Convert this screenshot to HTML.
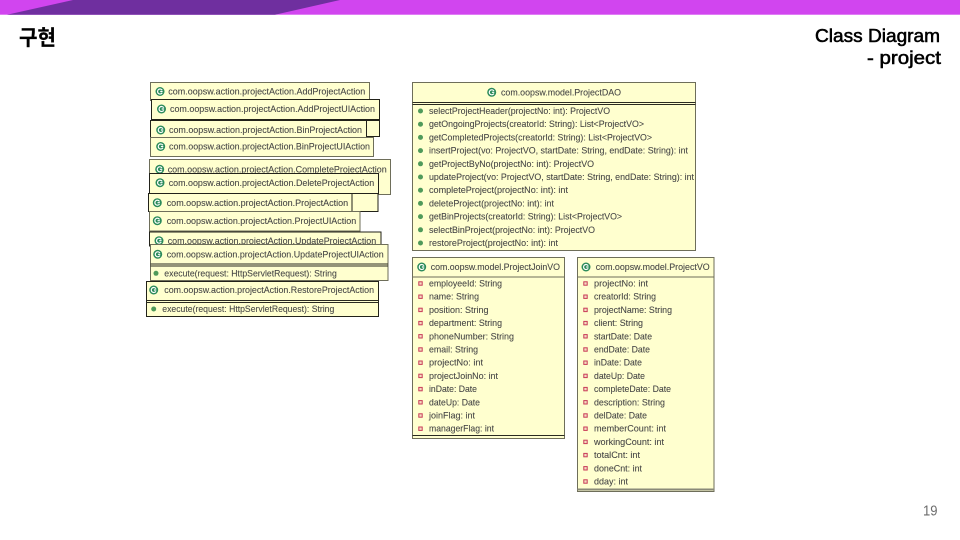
<!DOCTYPE html>
<html lang="ko"><head><meta charset="utf-8"><title>Class Diagram</title>
<style>
html,body{margin:0;padding:0;background:#fff;width:960px;height:540px;overflow:hidden}
svg{display:block}
.d text{font:9.4px "Liberation Sans",sans-serif;fill:#454545;stroke:#454545;stroke-width:.08}
.d rect{fill:#ffffcf;stroke:#22221a;stroke-width:1}
.d rect.g{stroke:#6e6e5a}
.d line{stroke:#2a2a20;stroke-width:1}
</style></head><body>
<svg width="960" height="540" viewBox="0 0 960 540" xmlns="http://www.w3.org/2000/svg">
<defs>
<g id="c"><circle r="4.5" fill="#2a8a5a"/><path d="M2.2-1.3A2.5 2.500 0 1 0 2.200 1.300M.2 0H2.600" fill="none" stroke="#fff" stroke-width="1.200"/></g>
<g id="m"><circle r="2.500" fill="#4f9a5a"/></g>
<g id="f"><rect x="-1.700" y="-1.700" width="3.400" height="3.400" style="fill:#f5dcc0;stroke:#c83a58;stroke-width:1"/></g>
</defs>
<rect width="960" height="14.700" fill="#d145ef"/>
<polygon points="7,14.700 73,0 340,0 275,14.700" fill="#6f2f9f"/>
<text x="19" y="45" font-family="'Liberation Sans','Noto Sans CJK KR',sans-serif" font-size="21" font-weight="700" fill="#000" stroke="#000" stroke-width=".2" textLength="37" lengthAdjust="spacingAndGlyphs">구현</text>
<text x="815" y="42" font-family="'Liberation Sans',sans-serif" font-size="18" stroke="#000" stroke-width=".55" fill="#000" textLength="125" lengthAdjust="spacingAndGlyphs">Class Diagram</text>
<text x="867" y="64" font-family="'Liberation Sans',sans-serif" font-size="18" stroke="#000" stroke-width=".55" fill="#000" textLength="74" lengthAdjust="spacingAndGlyphs">- project</text>
<text x="923" y="515.500" font-family="'Liberation Sans',sans-serif" font-size="14.500" fill="#6b6b6b" textLength="14.500" lengthAdjust="spacingAndGlyphs">19</text>

<g class="d" style="filter:blur(.3px)">
<!-- left stack -->
<rect x="150.500" y="120.500" width="229" height="16"/>
<rect class="g" x="150.500" y="82.500" width="219" height="18"/>
<use href="#c" x="160" y="91.500"/><text x="168.300" y="94.700" textLength="197" lengthAdjust="spacingAndGlyphs">com.oopsw.action.projectAction.AddProjectAction</text>
<rect x="151.500" y="99.500" width="228" height="20"/>
<use href="#c" x="161.500" y="109"/><text x="170" y="112.200" textLength="205" lengthAdjust="spacingAndGlyphs">com.oopsw.action.projectAction.AddProjectUIAction</text>
<rect x="150.500" y="120.500" width="216" height="18"/>
<use href="#c" x="160.700" y="130"/><text x="169" y="133.200" textLength="193" lengthAdjust="spacingAndGlyphs">com.oopsw.action.projectAction.BinProjectAction</text>
<rect class="g" x="150.500" y="137.500" width="223" height="19"/>
<use href="#c" x="160.700" y="146.500"/><text x="169" y="149.700" textLength="201" lengthAdjust="spacingAndGlyphs">com.oopsw.action.projectAction.BinProjectUIAction</text>
<rect class="g" x="149.500" y="159.500" width="241" height="35"/>
<use href="#c" x="159.700" y="169.300"/><text x="167.700" y="172.500" textLength="219" lengthAdjust="spacingAndGlyphs">com.oopsw.action.projectAction.CompleteProjectAction</text>
<rect x="149.500" y="173.500" width="229" height="20"/>
<use href="#c" x="160" y="182.700"/><text x="168.700" y="185.900" textLength="205.500" lengthAdjust="spacingAndGlyphs">com.oopsw.action.projectAction.DeleteProjectAction</text>
<rect x="148.500" y="193.500" width="229.500" height="18"/>
<rect x="148.500" y="193.500" width="203.500" height="18"/>
<use href="#c" x="157.300" y="202.700"/><text x="166.700" y="205.900" textLength="181.500" lengthAdjust="spacingAndGlyphs">com.oopsw.action.projectAction.ProjectAction</text>
<rect class="g" x="149.500" y="211.500" width="210.500" height="19.500"/>
<use href="#c" x="157.300" y="220.700"/><text x="166.700" y="223.900" textLength="189.500" lengthAdjust="spacingAndGlyphs">com.oopsw.action.projectAction.ProjectUIAction</text>
<rect x="149.500" y="232" width="231.500" height="14"/>
<use href="#c" x="159" y="240.700"/><text x="167.700" y="243.900" textLength="208.500" lengthAdjust="spacingAndGlyphs">com.oopsw.action.projectAction.UpdateProjectAction</text>
<rect class="g" x="150.500" y="244.500" width="237.500" height="36"/>
<line x1="150.500" y1="264" x2="388" y2="264"/><line x1="150.500" y1="266" x2="388" y2="266"/>
<use href="#c" x="157.700" y="254.300"/><text x="166.700" y="257.500" textLength="217" lengthAdjust="spacingAndGlyphs">com.oopsw.action.projectAction.UpdateProjectUIAction</text>
<use href="#m" x="156" y="273.300"/><text x="164.300" y="276.300" textLength="172.500" lengthAdjust="spacingAndGlyphs">execute(request: HttpServletRequest): String</text>
<rect x="146.500" y="281.500" width="232" height="35"/>
<line x1="146.500" y1="300.500" x2="378.500" y2="300.500"/><line x1="146.500" y1="302.500" x2="378.500" y2="302.500"/>
<use href="#c" x="153.700" y="290"/><text x="164.300" y="293.200" textLength="209.700" lengthAdjust="spacingAndGlyphs">com.oopsw.action.projectAction.RestoreProjectAction</text>
<use href="#m" x="153.700" y="309"/><text x="162.300" y="312" textLength="172" lengthAdjust="spacingAndGlyphs">execute(request: HttpServletRequest): String</text>

<!-- DAO -->
<rect class="g" x="412.500" y="82.500" width="283" height="168"/>
<line x1="412.500" y1="102.500" x2="695.500" y2="102.500"/><line x1="412.500" y1="104.500" x2="695.500" y2="104.500"/>
<use href="#c" x="491.700" y="92.300"/><text x="501" y="95.500" textLength="120" lengthAdjust="spacingAndGlyphs">com.oopsw.model.ProjectDAO</text>
<use href="#m" x="420.500" y="111"/><text x="429" y="114" textLength="181" lengthAdjust="spacingAndGlyphs">selectProjectHeader(projectNo: int): ProjectVO</text>
<use href="#m" x="420.500" y="124.200"/><text x="429" y="127.200" textLength="215" lengthAdjust="spacingAndGlyphs">getOngoingProjects(creatorId: String): List&lt;ProjectVO&gt;</text>
<use href="#m" x="420.500" y="137.400"/><text x="429" y="140.400" textLength="223" lengthAdjust="spacingAndGlyphs">getCompletedProjects(creatorId: String): List&lt;ProjectVO&gt;</text>
<use href="#m" x="420.500" y="150.600"/><text x="429" y="153.600" textLength="259" lengthAdjust="spacingAndGlyphs">insertProject(vo: ProjectVO, startDate: String, endDate: String): int</text>
<use href="#m" x="420.500" y="163.800"/><text x="429" y="166.800" textLength="165" lengthAdjust="spacingAndGlyphs">getProjectByNo(projectNo: int): ProjectVO</text>
<use href="#m" x="420.500" y="177"/><text x="429" y="180" textLength="265" lengthAdjust="spacingAndGlyphs">updateProject(vo: ProjectVO, startDate: String, endDate: String): int</text>
<use href="#m" x="420.500" y="190.200"/><text x="429" y="193.200" textLength="139" lengthAdjust="spacingAndGlyphs">completeProject(projectNo: int): int</text>
<use href="#m" x="420.500" y="203.400"/><text x="429" y="206.400" textLength="125" lengthAdjust="spacingAndGlyphs">deleteProject(projectNo: int): int</text>
<use href="#m" x="420.500" y="216.600"/><text x="429" y="219.600" textLength="193" lengthAdjust="spacingAndGlyphs">getBinProjects(creatorId: String): List&lt;ProjectVO&gt;</text>
<use href="#m" x="420.500" y="229.800"/><text x="429" y="232.800" textLength="166" lengthAdjust="spacingAndGlyphs">selectBinProject(projectNo: int): ProjectVO</text>
<use href="#m" x="420.500" y="243"/><text x="429" y="246" textLength="129" lengthAdjust="spacingAndGlyphs">restoreProject(projectNo: int): int</text>

<!-- JoinVO -->
<rect class="g" x="412.500" y="257.500" width="152" height="181"/>
<line x1="412.500" y1="277" x2="564.500" y2="277" style="stroke:#6e6e5a"/><line x1="412.500" y1="435.500" x2="564.500" y2="435.500"/>
<use href="#c" x="421.700" y="267"/><text x="430.700" y="270.200" textLength="129.300" lengthAdjust="spacingAndGlyphs">com.oopsw.model.ProjectJoinVO</text>
<use href="#f" x="420.500" y="283.500"/><text x="429" y="286.500" textLength="73" lengthAdjust="spacingAndGlyphs">employeeId: String</text>
<use href="#f" x="420.500" y="296.700"/><text x="429" y="299.700" textLength="50" lengthAdjust="spacingAndGlyphs">name: String</text>
<use href="#f" x="420.500" y="309.900"/><text x="429" y="312.900" textLength="59.500" lengthAdjust="spacingAndGlyphs">position: String</text>
<use href="#f" x="420.500" y="323.100"/><text x="429" y="326.100" textLength="73" lengthAdjust="spacingAndGlyphs">department: String</text>
<use href="#f" x="420.500" y="336.300"/><text x="429" y="339.300" textLength="85" lengthAdjust="spacingAndGlyphs">phoneNumber: String</text>
<use href="#f" x="420.500" y="349.500"/><text x="429" y="352.500" textLength="49" lengthAdjust="spacingAndGlyphs">email: String</text>
<use href="#f" x="420.500" y="362.700"/><text x="429" y="365.700" textLength="54" lengthAdjust="spacingAndGlyphs">projectNo: int</text>
<use href="#f" x="420.500" y="375.900"/><text x="429" y="378.900" textLength="69" lengthAdjust="spacingAndGlyphs">projectJoinNo: int</text>
<use href="#f" x="420.500" y="389.100"/><text x="429" y="392.100" textLength="48" lengthAdjust="spacingAndGlyphs">inDate: Date</text>
<use href="#f" x="420.500" y="402.300"/><text x="429" y="405.300" textLength="51" lengthAdjust="spacingAndGlyphs">dateUp: Date</text>
<use href="#f" x="420.500" y="415.500"/><text x="429" y="418.500" textLength="46" lengthAdjust="spacingAndGlyphs">joinFlag: int</text>
<use href="#f" x="420.500" y="428.700"/><text x="429" y="431.700" textLength="65" lengthAdjust="spacingAndGlyphs">managerFlag: int</text>

<!-- ProjectVO -->
<rect class="g" x="577.500" y="257.500" width="136.500" height="234"/>
<line x1="577.500" y1="277" x2="714" y2="277" style="stroke:#6e6e5a"/><line x1="577.500" y1="489.500" x2="714" y2="489.500" style="stroke:#8a8a78;stroke-width:2"/>
<use href="#c" x="586" y="267"/><text x="595.700" y="270.200" textLength="114" lengthAdjust="spacingAndGlyphs">com.oopsw.model.ProjectVO</text>
<use href="#f" x="585.500" y="283.500"/><text x="594" y="286.500" textLength="54" lengthAdjust="spacingAndGlyphs">projectNo: int</text>
<use href="#f" x="585.500" y="296.700"/><text x="594" y="299.700" textLength="62" lengthAdjust="spacingAndGlyphs">creatorId: String</text>
<use href="#f" x="585.500" y="309.900"/><text x="594" y="312.900" textLength="78" lengthAdjust="spacingAndGlyphs">projectName: String</text>
<use href="#f" x="585.500" y="323.100"/><text x="594" y="326.100" textLength="49" lengthAdjust="spacingAndGlyphs">client: String</text>
<use href="#f" x="585.500" y="336.300"/><text x="594" y="339.300" textLength="58" lengthAdjust="spacingAndGlyphs">startDate: Date</text>
<use href="#f" x="585.500" y="349.500"/><text x="594" y="352.500" textLength="56" lengthAdjust="spacingAndGlyphs">endDate: Date</text>
<use href="#f" x="585.500" y="362.700"/><text x="594" y="365.700" textLength="48" lengthAdjust="spacingAndGlyphs">inDate: Date</text>
<use href="#f" x="585.500" y="375.900"/><text x="594" y="378.900" textLength="51" lengthAdjust="spacingAndGlyphs">dateUp: Date</text>
<use href="#f" x="585.500" y="389.100"/><text x="594" y="392.100" textLength="77" lengthAdjust="spacingAndGlyphs">completeDate: Date</text>
<use href="#f" x="585.500" y="402.300"/><text x="594" y="405.300" textLength="71" lengthAdjust="spacingAndGlyphs">description: String</text>
<use href="#f" x="585.500" y="415.500"/><text x="594" y="418.500" textLength="53" lengthAdjust="spacingAndGlyphs">delDate: Date</text>
<use href="#f" x="585.500" y="428.700"/><text x="594" y="431.700" textLength="72" lengthAdjust="spacingAndGlyphs">memberCount: int</text>
<use href="#f" x="585.500" y="441.900"/><text x="594" y="444.900" textLength="70" lengthAdjust="spacingAndGlyphs">workingCount: int</text>
<use href="#f" x="585.500" y="455.100"/><text x="594" y="458.100" textLength="46" lengthAdjust="spacingAndGlyphs">totalCnt: int</text>
<use href="#f" x="585.500" y="468.300"/><text x="594" y="471.300" textLength="48" lengthAdjust="spacingAndGlyphs">doneCnt: int</text>
<use href="#f" x="585.500" y="481.500"/><text x="594" y="484.500" textLength="34" lengthAdjust="spacingAndGlyphs">dday: int</text>
</g>
</svg>
</body></html>
